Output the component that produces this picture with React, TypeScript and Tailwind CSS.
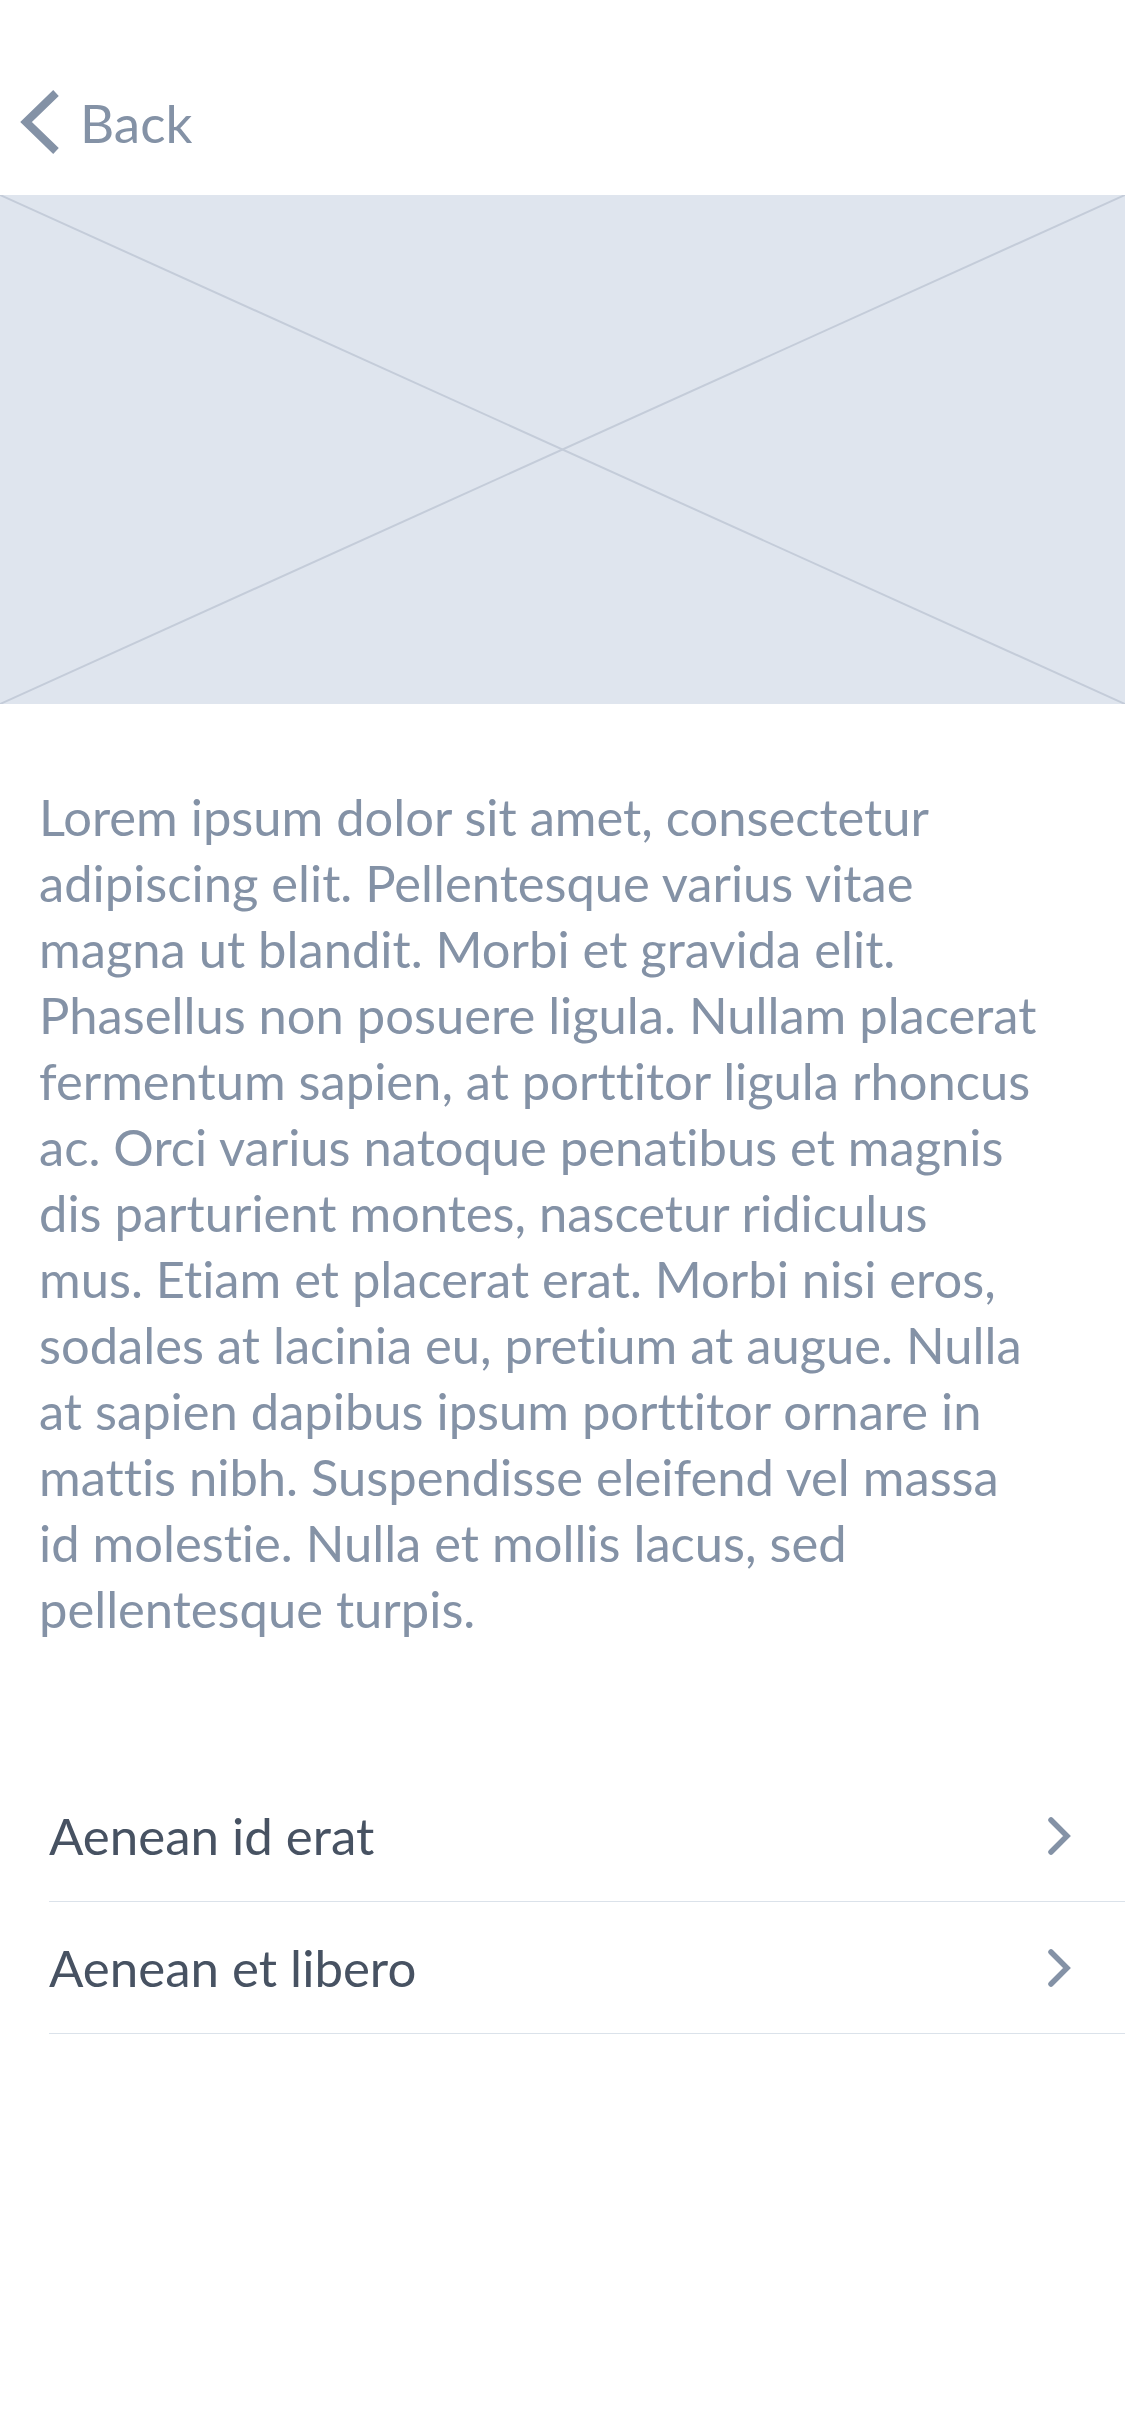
import React from "react";

const lines = [
  "Lorem ipsum dolor sit amet, consectetur",
  "adipiscing elit. Pellentesque varius vitae",
  "magna ut blandit. Morbi et gravida elit.",
  "Phasellus non posuere ligula. Nullam placerat",
  "fermentum sapien, at porttitor ligula rhoncus",
  "ac. Orci varius natoque penatibus et magnis",
  "dis parturient montes, nascetur ridiculus",
  "mus. Etiam et placerat erat. Morbi nisi eros,",
  "sodales at lacinia eu, pretium at augue. Nulla",
  "at sapien dapibus ipsum porttitor ornare in",
  "mattis nibh. Suspendisse eleifend vel massa",
  "id molestie. Nulla et mollis lacus, sed",
  "pellentesque turpis.",
];

function Row({ label }: { label: string }) {
  return (
    <div className="flex h-[132px] items-center justify-between border-b border-[#dbe2ea] pr-[54px]">
      <span className="text-[51px] leading-[61px] text-[#475262]">{label}</span>
      <svg width="24" height="40" viewBox="0 0 24 40" className="block">
        <polyline
          points="4,4 20,20 4,36"
          fill="none"
          stroke="#8492a6"
          strokeWidth="5.5"
          strokeLinecap="round"
          strokeLinejoin="miter"
        />
      </svg>
    </div>
  );
}

export default function App() {
  return (
    <div
      className="min-h-[2436px] w-[1125px] bg-white [font-variant-ligatures:none]"
      style={{ fontFamily: "Lato, 'Noto Sans', sans-serif" }}
    >
      <div className="flex h-[195px] items-start pt-[80px]">
        <div className="flex h-[84px] items-center pl-[16px]">
          <svg width="48" height="70" viewBox="0 0 48 70" className="block">
            <polyline
              points="40,6 10,35 40,64"
              fill="none"
              stroke="#8492a6"
              strokeWidth="8"
              strokeLinecap="butt"
              strokeLinejoin="miter"
            />
          </svg>
          <span className="ml-[16px] text-[53px] leading-[61px] text-[#8492a6]">Back</span>
        </div>
      </div>

      <div className="relative h-[509px] w-full bg-[#dfe5ee]">
        <svg
          className="absolute inset-0 h-full w-full"
          viewBox="0 0 1125 509"
          preserveAspectRatio="none"
        >
          <line x1="0" y1="0" x2="1125" y2="509" stroke="#c4ccd9" strokeWidth="2" />
          <line x1="1125" y1="0" x2="0" y2="509" stroke="#c4ccd9" strokeWidth="2" />
        </svg>
      </div>

      <p className="mt-[80px] whitespace-nowrap pl-[39px] pr-[36px] text-[50.7px] leading-[66px] text-[#8492a6]">
        {lines.map((l, i) => (
          <React.Fragment key={i}>
            {l}
            {i < lines.length - 1 && <br />}
          </React.Fragment>
        ))}
      </p>

      <div className="mt-[128px] ml-[49px]">
        <Row label="Aenean id erat" />
        <Row label="Aenean et libero" />
      </div>
    </div>
  );
}
